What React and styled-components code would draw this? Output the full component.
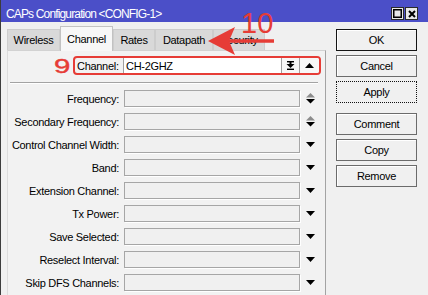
import React from 'react';
import styled, { createGlobalStyle } from 'styled-components';

const GlobalStyle = createGlobalStyle`
  html, body {
    margin: 0;
    padding: 0;
    background: #f0f0f0;
  }
  body {
    font-family: 'Liberation Sans', Arial, sans-serif;
  }
`;

const RED = '#e63c36';

const Window = styled.div`
  position: relative;
  width: 428px;
  height: 295px;
  box-sizing: border-box;
  display: flex;
  flex-direction: column;
  background: #f0f0f0;
  border-left: 1px solid #3c3c3c;
  overflow: hidden;
`;

const TitleBar = styled.div`
  height: 22px;
  flex: none;
  display: flex;
  align-items: flex-start;
  background: #4b4fc8;
  color: #fff;
  padding-left: 5px;
`;

const TitleText = styled.span`
  margin-top: 7px;
  font-size: 12px;
  line-height: 14px;
  letter-spacing: -0.85px;
  white-space: nowrap;
`;

const TitleButtons = styled.div`
  margin: 7px 10px 0 auto;
  display: flex;
  gap: 1px;
`;

const TitleButton = styled.div`
  width: 13px;
  height: 13px;
  box-sizing: border-box;
  border: 1px solid #2b2b2b;
  background: #e8e8e8;
  display: flex;
  align-items: center;
  justify-content: center;
`;

const Body = styled.div`
  flex: 1;
  display: flex;
  min-height: 0;
`;

const Main = styled.div`
  width: 325px;
  flex: none;
  display: flex;
  flex-direction: column;
`;

const Tabs = styled.div`
  height: 28px;
  flex: none;
  display: flex;
  align-items: flex-end;
  padding-left: 6px;
`;

const Tab = styled.div`
  width: ${(p) => p.$w}px;
  height: ${(p) => (p.$active ? 25 : 21)}px;
  box-sizing: border-box;
  display: flex;
  align-items: center;
  justify-content: center;
  font-size: 11px;
  letter-spacing: -0.3px;
  color: #000;
  background: ${(p) => (p.$active ? '#f7f7f7' : '#d9d9d9')};
  border: 1px solid ${(p) => (p.$active ? '#c2c2c2' : '#cdcdcd')};
  border-bottom: none;
  margin-bottom: ${(p) => (p.$active ? -1 : 0)}px;
  position: relative;
  z-index: ${(p) => (p.$active ? 1 : 0)};
`;

const Panel = styled.div`
  flex: 1;
  margin-left: 6px;
  background: #f2f2f2;
  border-top: 1px solid #d2d2d2;
  border-left: 1px solid #dcdcdc;
  border-right: 1px solid #a3a3a3;
  display: flex;
  flex-direction: column;
`;

const ChannelLine = styled.div`
  display: flex;
  align-items: center;
  margin-top: 5px;
  padding-left: 46px;
  height: 19px;
`;

const Marker = styled.span`
  width: 19px;
  color: ${RED};
  font-size: 21px;
  line-height: 19px;
  display: inline-block;
  transform: scaleX(1.4);
  transform-origin: left center;
  -webkit-text-stroke: 0.4px ${RED};
`;

const ChannelBox = styled.div`
  width: 248px;
  height: 19px;
  box-sizing: border-box;
  border: 2px solid ${RED};
  border-radius: 4px;
  display: flex;
  align-items: stretch;
  overflow: hidden;
`;

const ChannelLabel = styled.div`
  width: 48px;
  padding-left: 2px;
  box-sizing: border-box;
  display: flex;
  align-items: center;
  font-size: 11px;
  letter-spacing: -0.3px;
`;

const ChannelValue = styled.div`
  flex: 1;
  background: #fff;
  border-left: 1px solid #a0a0a0;
  padding-left: 2px;
  display: flex;
  align-items: center;
  font-size: 11px;
  letter-spacing: -0.3px;
`;

const ChannelButton = styled.div`
  width: ${(p) => p.$w}px;
  flex: none;
  border-left: 1px solid #a0a0a0;
  background: #f7f7f7;
  display: flex;
  align-items: center;
  justify-content: center;
`;

const Separator = styled.div`
  height: 1px;
  margin: 7px 7px 0 2px;
  background: #a3a3a3;
  border-bottom: 1px solid #fff;
`;

const Rows = styled.div`
  margin-top: 3px;
  display: flex;
  flex-direction: column;
`;

const Row = styled.div`
  height: 23px;
  display: flex;
  align-items: center;
`;

const Label = styled.div`
  width: 111px;
  text-align: right;
  font-size: 11px;
  letter-spacing: -0.3px;
  white-space: nowrap;
  color: #000;
`;

const Field = styled.div`
  width: 176px;
  height: 17px;
  margin-left: 5px;
  box-sizing: border-box;
  border: 1px solid #a6a6a6;
  background: #f0f0f0;
  box-shadow: 1px 1px 0 #fff;
`;

const ArrowCell = styled.div`
  width: 20px;
  display: flex;
  align-items: center;
  justify-content: center;
`;

const Side = styled.div`
  flex: 1;
  display: flex;
  flex-direction: column;
  padding: 7px 0 0 10px;
  gap: 4px;
`;

const Button = styled.div`
  width: 81px;
  height: 22px;
  box-sizing: border-box;
  display: flex;
  align-items: center;
  justify-content: center;
  font-size: 11px;
  letter-spacing: -0.3px;
  color: #000;
  background: #f0f0f0;
  border: 1px ${(p) => (p.$focus ? 'dotted' : 'solid')}
    ${(p) => (p.$default ? '#141414' : p.$focus ? '#111' : '#6b6b6b')};
  box-shadow: ${(p) => (p.$focus ? 'none' : 'inset 1px 1px 0 #fff')};
  margin-top: ${(p) => (p.$spaced ? 6 : 0)}px;
`;

const Annotation = styled.div`
  position: absolute;
  left: 205px;
  top: 8px;
  width: 72px;
  height: 50px;
  pointer-events: none;
`;

const AnnotationNumber = styled.span`
  position: absolute;
  left: 35px;
  top: 5px;
  color: ${RED};
  font-size: 29px;
  line-height: 21px;
`;

const DownArrow = ({ color = '#000' }) => (
  <svg width="9" height="5" viewBox="0 0 9 5">
    <polygon points="0,0 9,0 4.5,5" fill={color} />
  </svg>
);

const UpArrow = ({ color = '#000' }) => (
  <svg width="9" height="5" viewBox="0 0 9 5">
    <polygon points="0,5 9,5 4.5,0" fill={color} />
  </svg>
);

const Spinner = () => (
  <svg width="9" height="11" viewBox="0 0 9 11">
    <polygon points="0,4.5 9,4.5 4.5,0" fill="#8c8c8c" />
    <polygon points="0,6 9,6 4.5,10.5" fill="#000" />
  </svg>
);

const DropAll = () => (
  <svg width="9" height="9" viewBox="0 0 9 9">
    <rect x="1" y="0" width="7" height="1.4" fill="#000" />
    <rect x="3.5" y="1" width="2" height="2" fill="#000" />
    <polygon points="0.5,3 8.5,3 4.5,7" fill="#000" />
    <rect x="1" y="7.6" width="7" height="1.4" fill="#000" />
  </svg>
);

const tabs = [
  { name: 'Wireless', w: 53 },
  { name: 'Channel', w: 53, active: true },
  { name: 'Rates', w: 42 },
  { name: 'Datapath', w: 58 },
  { name: 'Security', w: 52 },
];

const fields = [
  { label: 'Frequency:', spin: true },
  { label: 'Secondary Frequency:', spin: true },
  { label: 'Control Channel Width:' },
  { label: 'Band:' },
  { label: 'Extension Channel:' },
  { label: 'Tx Power:' },
  { label: 'Save Selected:' },
  { label: 'Reselect Interval:' },
  { label: 'Skip DFS Channels:' },
];

function App() {
  return (
    <>
      <GlobalStyle />
      <Window>
        <TitleBar>
          <TitleText>CAPs Configuration &lt;CONFIG-1&gt;</TitleText>
          <TitleButtons>
            <TitleButton>
              <svg width="9" height="9" viewBox="0 0 9 9">
                <rect x="0.75" y="0.75" width="7.5" height="7.5" fill="none" stroke="#000" strokeWidth="1.5" />
              </svg>
            </TitleButton>
            <TitleButton>
              <svg width="8" height="8" viewBox="0 0 8 8">
                <path d="M1 1 L7 7 M7 1 L1 7" stroke="#000" strokeWidth="2" />
              </svg>
            </TitleButton>
          </TitleButtons>
        </TitleBar>
        <Body>
          <Main>
            <Tabs>
              {tabs.map((t) => (
                <Tab key={t.name} $w={t.w} $active={t.active}>
                  {t.name}
                </Tab>
              ))}
            </Tabs>
            <Panel>
              <ChannelLine>
                <Marker>9</Marker>
                <ChannelBox>
                  <ChannelLabel>Channel:</ChannelLabel>
                  <ChannelValue>CH-2GHZ</ChannelValue>
                  <ChannelButton $w={17}>
                    <DropAll />
                  </ChannelButton>
                  <ChannelButton $w={19}>
                    <UpArrow />
                  </ChannelButton>
                </ChannelBox>
              </ChannelLine>
              <Separator />
              <Rows>
                {fields.map((f) => (
                  <Row key={f.label}>
                    <Label>{f.label}</Label>
                    <Field />
                    <ArrowCell>{f.spin ? <Spinner /> : <DownArrow />}</ArrowCell>
                  </Row>
                ))}
              </Rows>
            </Panel>
          </Main>
          <Side>
            <Button $default>OK</Button>
            <Button>Cancel</Button>
            <Button $focus>Apply</Button>
            <Button $spaced>Comment</Button>
            <Button>Copy</Button>
            <Button>Remove</Button>
          </Side>
        </Body>
        <Annotation>
          <AnnotationNumber>10</AnnotationNumber>
          <svg width="72" height="50" viewBox="205 8 72 50">
            <line x1="222" y1="41" x2="273" y2="41" stroke={RED} strokeWidth="3.5" />
            <polygon points="207,41 234,27 228,41 234,55" fill={RED} />
          </svg>
        </Annotation>
      </Window>
    </>
  );
}

export default App;
